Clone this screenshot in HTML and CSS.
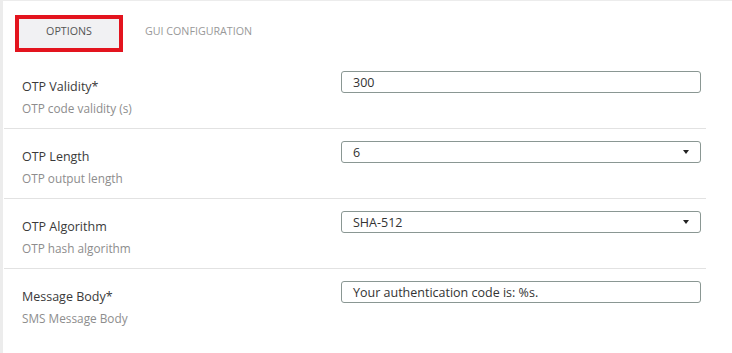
FILE: index.html
```html
<!DOCTYPE html>
<html>
<head>
<meta charset="utf-8">
<link rel="stylesheet" href="styles.css">
</head>
<body>
<div class="panel">
  <div class="tabs">
    <div class="tab active">OPTIONS</div>
    <div class="tab">GUI CONFIGURATION</div>
  </div>
  <div class="form">
    <div class="row">
      <div class="info">
        <div class="label">OTP Validity*</div>
        <div class="desc">OTP code validity (s)</div>
      </div>
      <div class="control"><div class="field">300</div></div>
    </div>
    <div class="row">
      <div class="info">
        <div class="label">OTP Length</div>
        <div class="desc">OTP output length</div>
      </div>
      <div class="control"><div class="field select"><span>6</span><span class="caret"></span></div></div>
    </div>
    <div class="row">
      <div class="info">
        <div class="label">OTP Algorithm</div>
        <div class="desc">OTP hash algorithm</div>
      </div>
      <div class="control"><div class="field select"><span>SHA-512</span><span class="caret"></span></div></div>
    </div>
    <div class="row">
      <div class="info">
        <div class="label">Message Body*</div>
        <div class="desc">SMS Message Body</div>
      </div>
      <div class="control"><div class="field">Your authentication code is: %s.</div></div>
    </div>
  </div>
</div>
</body>
</html>
```

FILE: styles.css
```css
html, body {
  margin: 0;
  padding: 0;
  background: #fff;
}
body {
  font-family: "Open Sans", "Noto Sans", sans-serif;
  color: #333;
}
.panel {
  height: 353px;
  box-sizing: border-box;
  border-left: 3px solid #ececec;
  border-top: 1px solid #ececec;
}
.tabs {
  display: flex;
  align-items: flex-start;
  padding: 14px 0 0 12px;
  height: 44px;
}
.tab {
  font-size: 10.7px;
  color: #999;
  height: 37px;
  box-sizing: border-box;
  display: flex;
  align-items: center;
  justify-content: center;
  padding: 0 22px 5px;
}
.tab.active {
  width: 108px;
  border: 4px solid #e3141e;
  background: #f1f1f3;
  color: #555;
  padding: 0 0 5px;
}
.form {
  margin-left: 1px;
  width: 702px;
}
.row {
  display: flex;
  height: 70px;
  box-sizing: border-box;
  border-bottom: 1px solid #e2e2e2;
  padding-left: 18px;
}
.row:last-child {
  border-bottom: none;
}
.info {
  width: 319px;
  padding-top: 19px;
}
.label {
  font-size: 12.5px;
  color: #3a3a3a;
  line-height: 18px;
}
.desc {
  font-size: 11.8px;
  color: #8d8d8d;
  line-height: 18px;
  margin-top: 3px;
}
.control {
  padding-top: 12px;
}
.field {
  width: 360px;
  height: 22px;
  box-sizing: border-box;
  border: 1px solid #8a9793;
  border-radius: 3px;
  font-size: 12.5px;
  color: #333;
  padding: 0 11px;
  display: flex;
  align-items: center;
  justify-content: space-between;
}
.caret {
  width: 0;
  height: 0;
  border-left: 3.5px solid transparent;
  border-right: 3.5px solid transparent;
  border-top: 4px solid #222;
}
```
